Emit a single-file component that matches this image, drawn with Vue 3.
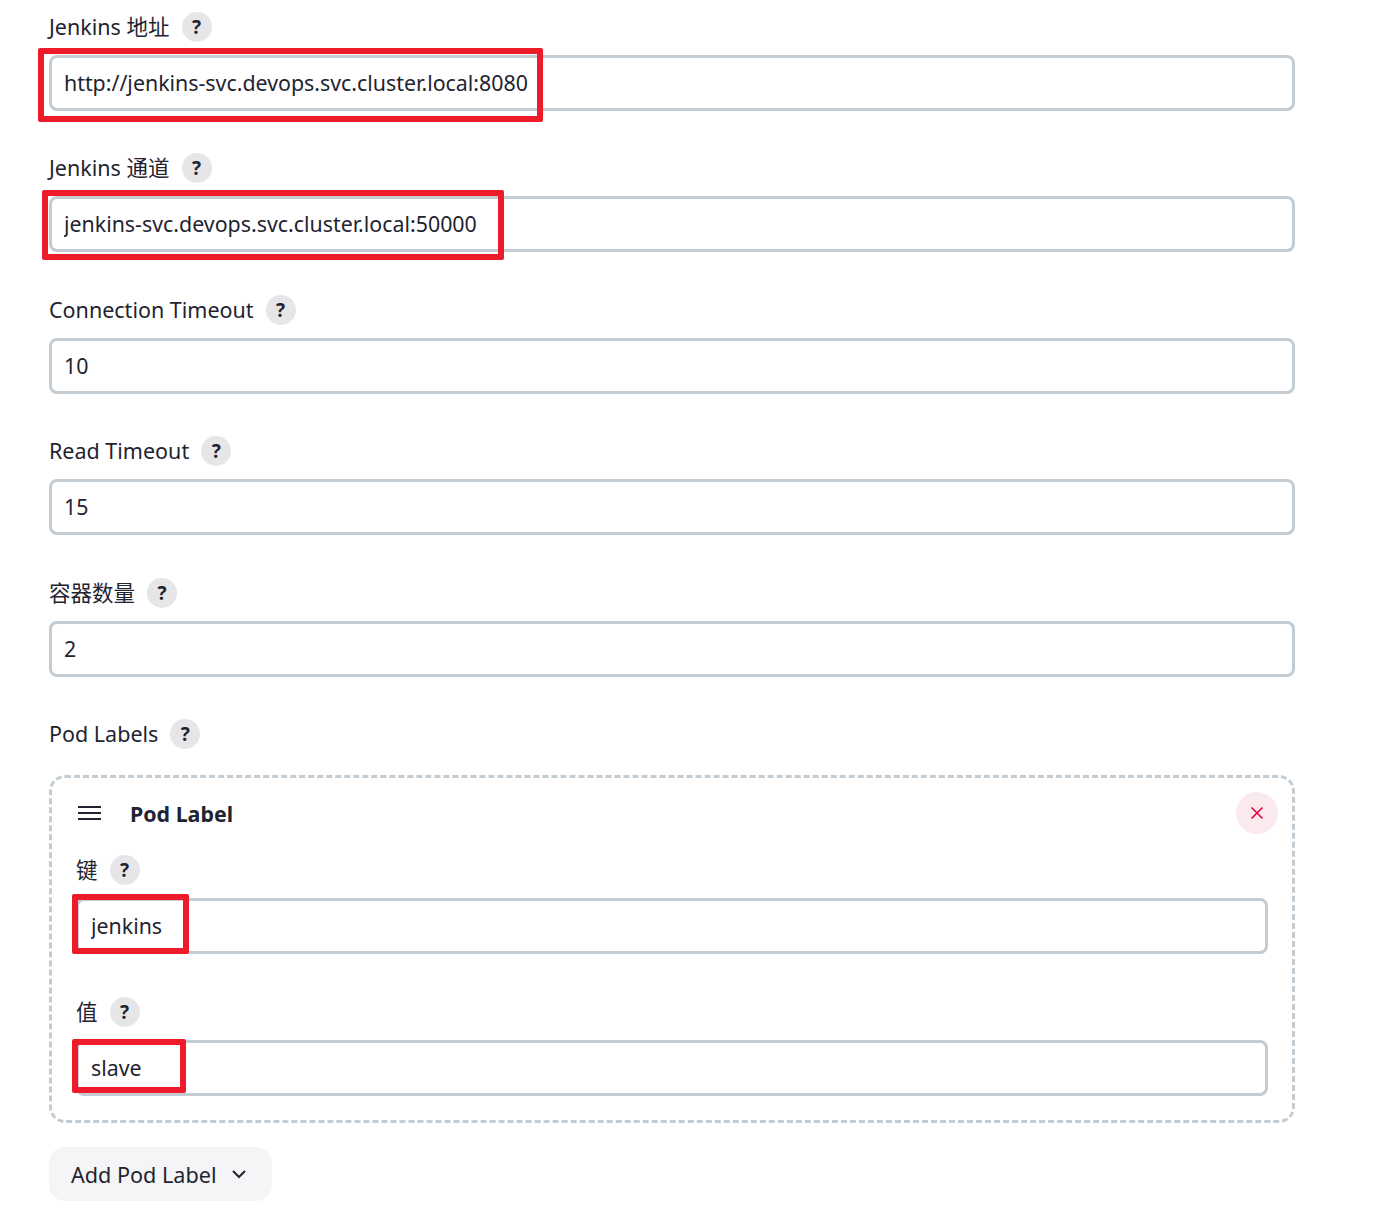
<script setup>
const fields = [
  { label: 'Jenkins 地址', value: 'http://jenkins-svc.devops.svc.cluster.local:8080', mark: 'mark-url' },
  { label: 'Jenkins 通道', value: 'jenkins-svc.devops.svc.cluster.local:50000', mark: 'mark-tunnel' },
  { label: 'Connection Timeout', value: '10' },
  { label: 'Read Timeout', value: '15' },
  { label: '容器数量', value: '2' }
]

const podFields = [
  { label: '键', value: 'jenkins', mark: 'mark-key' },
  { label: '值', value: 'slave', mark: 'mark-val' }
]
</script>

<template>
  <div class="page">
    <div v-for="f in fields" :key="f.label" class="field">
      <div class="label-row">
        <span class="label">{{ f.label }}</span>
        <span class="help">?</span>
      </div>
      <div class="input-wrap">
        <input class="input" type="text" :value="f.value" />
        <div v-if="f.mark" class="mark" :class="f.mark"></div>
      </div>
    </div>

    <div class="label-row">
      <span class="label">Pod Labels</span>
      <span class="help">?</span>
    </div>

    <div class="repeat">
      <div class="repeat-head">
        <svg class="drag" width="24" height="24" viewBox="0 0 24 24" fill="none" stroke="#1f2430" stroke-width="2">
          <path d="M0 6h23M0 12h23M0 18h23" />
        </svg>
        <span class="repeat-title">Pod Label</span>
        <button class="close" type="button" aria-label="删除">
          <svg width="16" height="16" viewBox="0 0 16 16" fill="none" stroke="#e6003c" stroke-width="1.6">
            <path d="M2.5 2.5l11 11M13.5 2.5l-11 11" />
          </svg>
        </button>
      </div>
      <div v-for="f in podFields" :key="f.label" class="field">
        <div class="label-row">
          <span class="label">{{ f.label }}</span>
          <span class="help">?</span>
        </div>
        <div class="input-wrap">
          <input class="input" type="text" :value="f.value" />
          <div class="mark" :class="f.mark"></div>
        </div>
      </div>
    </div>

    <button class="add" type="button">
      <span>Add Pod Label</span>
      <svg width="18" height="18" viewBox="0 0 18 18" fill="none" stroke="#1f2430" stroke-width="2">
        <path d="M3 6l6 6 6-6" />
      </svg>
    </button>
  </div>
</template>

<style scoped>
.page {
  width: 1246px;
  margin-left: 49px;
  padding-top: 12px;
  color: #1f2430;
  font-family: "Noto Sans", "Noto Sans CJK SC", sans-serif;
  font-size: 21.36px;
}

/* rows alternate 141px / 142px apart */
.field:nth-child(odd) {
  margin-bottom: 42px;
}

.field:nth-child(even) {
  margin-bottom: 43px;
}

.label-row {
  display: flex;
  align-items: center;
  gap: 12px;
  height: 30px;
}

.label {
  padding-bottom: 1px;
  font-size: 21.5px;
  line-height: 29px;
}

.help {
  width: 30px;
  height: 30px;
  border-radius: 50%;
  background: #e6e6e8;
  font-size: 19px;
  font-weight: 700;
  line-height: 30px;
  text-align: center;
}

.input-wrap {
  position: relative;
  margin-top: 13px;
}

.input {
  display: block;
  box-sizing: border-box;
  width: 100%;
  height: 56px;
  padding: 0 12px 1px;
  border: 3px solid #c2ccd2;
  border-radius: 8px;
  background: #fff;
  color: inherit;
  font: inherit;
}

.mark {
  position: absolute;
  box-sizing: border-box;
  border: 6px solid #ee1c2b;
  border-radius: 2px;
}

.mark-url { left: -11px; top: -7px; width: 505px; height: 74px; }
.mark-tunnel { left: -7px; top: -6px; width: 462px; height: 70px; }
.mark-key { left: -4px; top: -4px; width: 117px; height: 60px; }
.mark-val { left: -4px; top: -1px; width: 114px; height: 54px; }

.repeat {
  box-sizing: border-box;
  height: 348px;
  margin-top: 26px;
  padding: 14px 24px 0;
  border: 3px dashed #c2ccd2;
  border-radius: 16px;
}

.repeat-head {
  display: flex;
  align-items: center;
  height: 42px;
  margin-bottom: 21px;
}

.drag {
  margin-right: 28px;
  margin-left: 2px;
}

.repeat-title {
  font-weight: 700;
}

.close {
  display: flex;
  align-items: center;
  justify-content: center;
  width: 42px;
  height: 42px;
  margin-left: auto;
  margin-right: -10px;
  padding: 0;
  border: none;
  border-radius: 50%;
  background: #fbeaed;
}

.add {
  display: flex;
  align-items: center;
  gap: 14px;
  height: 54px;
  margin-top: 24px;
  padding: 0 24px 0 22px;
  border: none;
  border-radius: 16px;
  background: #f5f5f7;
  color: inherit;
  font-family: inherit;
  font-size: 21.6px;
}
</style>
